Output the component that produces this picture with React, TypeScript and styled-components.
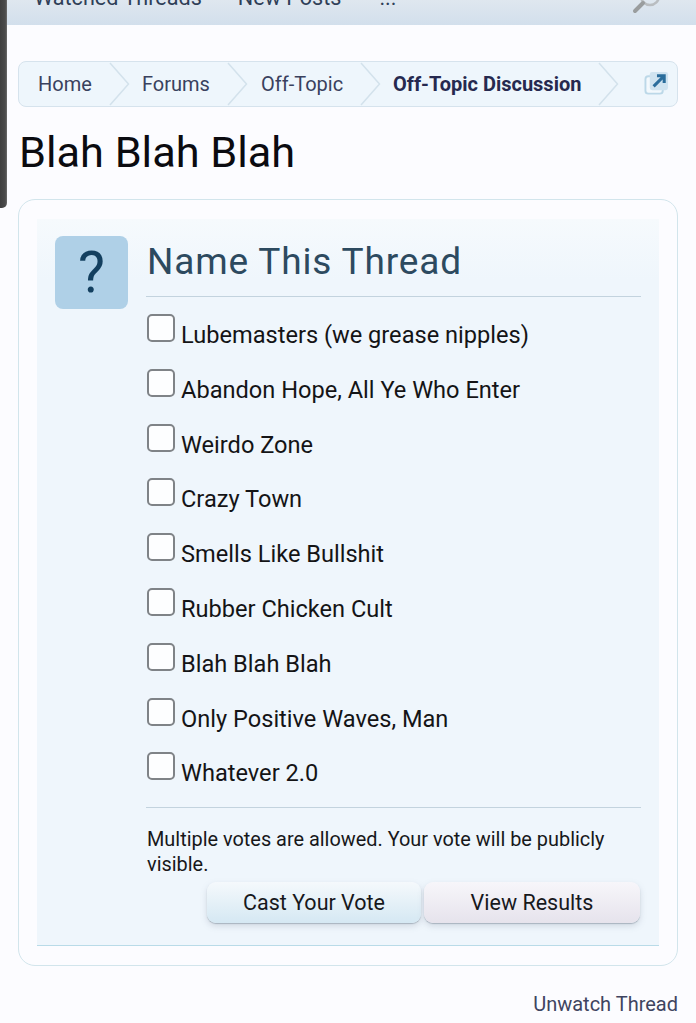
import React from "react";
import styled, { createGlobalStyle } from "styled-components";

const Global = createGlobalStyle`
  html, body { margin: 0; padding: 0; background: #fcfcff; }
  body { font-family: Roboto, "Liberation Sans", sans-serif; width: 696px; height: 1023px; overflow: hidden; }
`;
const Page = styled.div`position: relative; width: 696px; height: 1023px; overflow: hidden;`;
const Handle = styled.div`
  position: absolute; left: 0; top: 0; width: 7px; height: 208px;
  background: linear-gradient(90deg, #3f3f3f, #4b4b4b 75%, #6d6d6d); border-radius: 0 0 5px 0;
`;
const NavBar = styled.div`
  height: 25px; box-sizing: border-box; overflow: hidden; position: relative;
  background: linear-gradient(#dfe7ef, #d2dfec);
  display: flex; align-items: flex-end; padding: 0 0 15px 34px;
  font-size: 21.6px; line-height: 24px; color: #2f3f58;
`;
const NavItem = styled.span<{ $gap: number }>`white-space: nowrap; margin-right: ${(p) => p.$gap}px;`;
const SearchIcon = styled.svg`position: absolute; right: 34px; top: -13px; width: 30px; height: 28px;`;
const Breadcrumb = styled.nav`
  margin: 36px 18px 0; height: 46px; box-sizing: border-box;
  border: 1px solid #d6e3ed; border-radius: 8px; background: #eef6fc;
  display: flex; align-items: center; position: relative;
`;
const Crumb = styled.a<{ $w: number; $pad: number; $bold?: boolean }>`
  position: relative; width: ${(p) => p.$w}px; height: 44px; box-sizing: border-box; flex: none;
  padding-left: ${(p) => p.$pad}px; display: flex; align-items: center;
  font-size: 20px; color: ${(p) => (p.$bold ? "#26294f" : "#39415e")};
  font-weight: ${(p) => (p.$bold ? 700 : 400)}; white-space: nowrap;
`;
const Chevron = styled.svg`position: absolute; right: 0; top: 0; width: 21px; height: 44px;`;
const Jump = styled.svg`position: absolute; right: 8px; top: 9px; width: 25px; height: 25px;`;
const Title = styled.h1`
  margin: 18px 0 0 19px; font-size: 43.3px; line-height: 56px; font-weight: 400; color: #0b0b10;
`;
const Card = styled.section`
  margin: 18px 18px 0; height: 767px; box-sizing: border-box;
  border: 1px solid #d2e5ec; border-radius: 17px; padding: 19px 18px 19px;
`;
const Panel = styled.div`
  height: 727px; box-sizing: border-box; padding: 17px 17px 0 18px;
  background: linear-gradient(#f6fafd 0, #eff6fc 60px, #eff6fc 100%);
  border-bottom: 1px solid #b9dbe8;
  display: grid; grid-template-columns: 73px 1fr; column-gap: 19px;
`;
const IconBox = styled.div`
  width: 73px; height: 73px; border-radius: 8px; background: #afd0e7; color: #133f5f;
  display: flex; align-items: center; justify-content: center;
  font-size: 57px; line-height: 1; font-weight: 400; font-family: Roboto, sans-serif;
`;
const Body = styled.div`min-width: 0; padding-top: 1px;`;
const Heading = styled.h2`
  margin: 0 0 0 -1px; height: 60px; box-sizing: border-box; border-bottom: 1px solid #c3d3de;
  font-size: 37px; line-height: 50px; font-weight: 400; color: #2d4a5f; padding-left: 1px;
  letter-spacing: 0.85px; width: 495px;
`;
const Options = styled.div`display: flex; flex-direction: column; padding-top: 17px;`;
const Option = styled.label`height: 54.8px; display: flex; align-items: flex-start; gap: 6px;`;
const Box = styled.span`
  width: 28px; height: 28px; box-sizing: border-box; flex: none;
  border: 2px solid #7f8387; border-radius: 5px; background: #fdfeff;
`;
const OptionText = styled.span`font-size: 23.6px; line-height: 28px; margin-top: 7px; color: #141416; white-space: nowrap;`;
const Rule = styled.div`width: 495px; margin: 0 0 0 -1px; height: 1px; background: #c3d3de;`;
const Note = styled.p`
  margin: 19px 0 0; width: 490px; font-size: 19.9px; line-height: 25px; color: #17181a;
`;
const Buttons = styled.div`display: flex; justify-content: flex-end; gap: 3px; margin: 5px 0 0; width: 493px;`;
const Btn = styled.button<{ $alt?: boolean }>`
  width: ${(p) => (p.$alt ? 216 : 214)}px; height: 41px; border: 0; border-radius: 9px; padding: 0;
  font: 400 21.5px Roboto, sans-serif; color: #17181c;
  background: ${(p) => (p.$alt ? "linear-gradient(#f7f6fa, #e6e3ec)" : "linear-gradient(#f5f9fc, #d5e8f3)")};
  box-shadow: 0 1px 1px #a9b4bf, 0 3px 6px rgba(120,130,150,.25);
`;
const Footer = styled.div`
  margin: 24px 18px 0 0; text-align: right; font-size: 20px; line-height: 28px; color: #3f4460;
`;

const options = [
  "Lubemasters (we grease nipples)",
  "Abandon Hope, All Ye Who Enter",
  "Weirdo Zone",
  "Crazy Town",
  "Smells Like Bullshit",
  "Rubber Chicken Cult",
  "Blah Blah Blah",
  "Only Positive Waves, Man",
  "Whatever 2.0",
];

const Arrow = () => (
  <Chevron viewBox="0 0 21 44" fill="none">
    <path d="M1 1 L19.5 22 L1 43" stroke="#d3e2ec" strokeWidth="1.5" />
  </Chevron>
);

export default function App() {
  return (
    <Page>
      <Global />
      <NavBar>
        <NavItem $gap={36}>Watched Threads</NavItem>
        <NavItem $gap={38}>New Posts</NavItem>
        <NavItem $gap={0}>...</NavItem>
        <SearchIcon viewBox="0 0 30 28" fill="none">
          <circle cx="18" cy="9" r="9" stroke="#b9bdc0" strokeWidth="2.5" />
          <path d="M11 16 L3 24" stroke="#9a9d9e" strokeWidth="4" strokeLinecap="round" />
        </SearchIcon>
      </NavBar>
      <Breadcrumb>
        <Crumb $w={111} $pad={19}>Home<Arrow /></Crumb>
        <Crumb $w={118} $pad={12}>Forums<Arrow /></Crumb>
        <Crumb $w={133} $pad={13}>Off-Topic<Arrow /></Crumb>
        <Crumb $w={238} $pad={12} $bold>Off-Topic Discussion<Arrow /></Crumb>
        <Jump viewBox="0 0 26 26" fill="none">
          <rect x="1.5" y="5.5" width="18" height="18" rx="3" stroke="#bcd8e8" strokeWidth="2" fill="#f3f9fd" />
          <rect x="6" y="1" width="19" height="19" rx="2.5" fill="#cfe3f0" />
          <path d="M10 16 L20 6 M13.5 5 H21 V12.5" stroke="#2a6d9c" strokeWidth="3.2" />
        </Jump>
      </Breadcrumb>
      <Title>Blah Blah Blah</Title>
      <Card>
        <Panel>
          <IconBox>?</IconBox>
          <Body>
            <Heading>Name This Thread</Heading>
            <Options>
              {options.map((o) => (
                <Option key={o}>
                  <Box />
                  <OptionText>{o}</OptionText>
                </Option>
              ))}
            </Options>
            <Rule />
            <Note>Multiple votes are allowed. Your vote will be publicly visible.</Note>
            <Buttons>
              <Btn>Cast Your Vote</Btn>
              <Btn $alt>View Results</Btn>
            </Buttons>
          </Body>
        </Panel>
      </Card>
      <Footer>Unwatch Thread</Footer>
      <Handle />
    </Page>
  );
}
